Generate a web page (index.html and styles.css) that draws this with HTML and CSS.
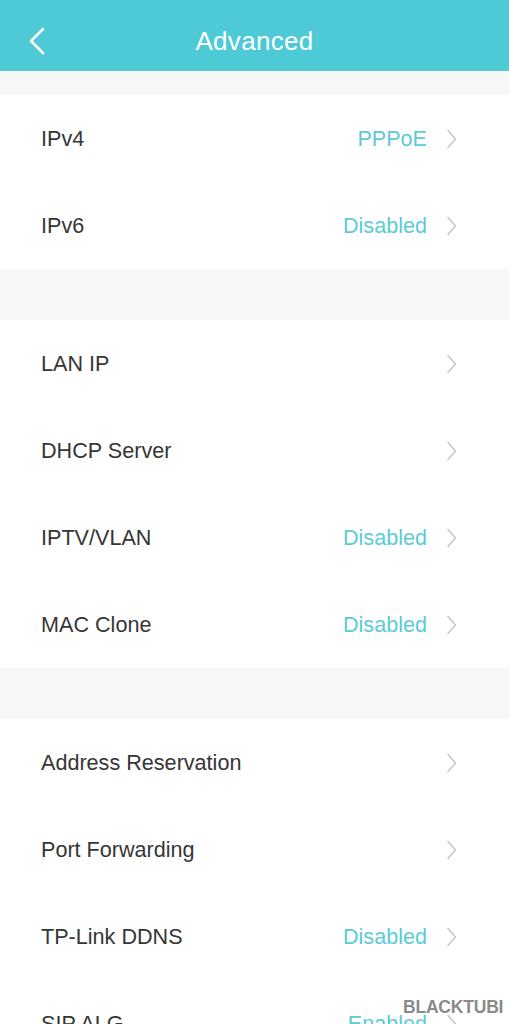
FILE: index.html
```html
<!DOCTYPE html>
<html>
<head>
<meta charset="utf-8">
<link rel="stylesheet" href="styles.css">
</head>
<body>
<div class="app">
  <header class="topbar">
    <svg class="back" width="18" height="28" viewBox="0 0 18 28"><path d="M15 2 L3 14 L15 26" fill="none" stroke="#fff" stroke-width="2.6" stroke-linecap="round" stroke-linejoin="round"/></svg>
    <h1 class="title">Advanced</h1>
  </header>
  <div class="gap first"></div>
  <section class="group">
    <div class="row"><span class="label">IPv4</span><span class="value">PPPoE</span><svg class="chev" width="11" height="20" viewBox="0 0 11 20"><path d="M1.5 1 L9.5 10 L1.5 19" fill="none" stroke="#c4c4c4" stroke-width="1.4"/></svg></div>
    <div class="row"><span class="label">IPv6</span><span class="value">Disabled</span><svg class="chev" width="11" height="20" viewBox="0 0 11 20"><path d="M1.5 1 L9.5 10 L1.5 19" fill="none" stroke="#c4c4c4" stroke-width="1.4"/></svg></div>
  </section>
  <div class="gap"></div>
  <section class="group">
    <div class="row"><span class="label">LAN IP</span><span class="value"></span><svg class="chev" width="11" height="20" viewBox="0 0 11 20"><path d="M1.5 1 L9.5 10 L1.5 19" fill="none" stroke="#c4c4c4" stroke-width="1.4"/></svg></div>
    <div class="row"><span class="label">DHCP Server</span><span class="value"></span><svg class="chev" width="11" height="20" viewBox="0 0 11 20"><path d="M1.5 1 L9.5 10 L1.5 19" fill="none" stroke="#c4c4c4" stroke-width="1.4"/></svg></div>
    <div class="row"><span class="label">IPTV/VLAN</span><span class="value">Disabled</span><svg class="chev" width="11" height="20" viewBox="0 0 11 20"><path d="M1.5 1 L9.5 10 L1.5 19" fill="none" stroke="#c4c4c4" stroke-width="1.4"/></svg></div>
    <div class="row"><span class="label">MAC Clone</span><span class="value">Disabled</span><svg class="chev" width="11" height="20" viewBox="0 0 11 20"><path d="M1.5 1 L9.5 10 L1.5 19" fill="none" stroke="#c4c4c4" stroke-width="1.4"/></svg></div>
  </section>
  <div class="gap"></div>
  <section class="group">
    <div class="row"><span class="label">Address Reservation</span><span class="value"></span><svg class="chev" width="11" height="20" viewBox="0 0 11 20"><path d="M1.5 1 L9.5 10 L1.5 19" fill="none" stroke="#c4c4c4" stroke-width="1.4"/></svg></div>
    <div class="row"><span class="label">Port Forwarding</span><span class="value"></span><svg class="chev" width="11" height="20" viewBox="0 0 11 20"><path d="M1.5 1 L9.5 10 L1.5 19" fill="none" stroke="#c4c4c4" stroke-width="1.4"/></svg></div>
    <div class="row"><span class="label">TP-Link DDNS</span><span class="value">Disabled</span><svg class="chev" width="11" height="20" viewBox="0 0 11 20"><path d="M1.5 1 L9.5 10 L1.5 19" fill="none" stroke="#c4c4c4" stroke-width="1.4"/></svg></div>
    <div class="row"><span class="label">SIP ALG</span><span class="value">Enabled</span><svg class="chev" width="11" height="20" viewBox="0 0 11 20"><path d="M1.5 1 L9.5 10 L1.5 19" fill="none" stroke="#c4c4c4" stroke-width="1.4"/></svg></div>
  </section>
  <div class="watermark">BLACKTUBI</div>
</div>
</body>
</html>
```
FILE: styles.css
```css
html, body {
  margin: 0;
  padding: 0;
  background: #fff;
}
.app {
  position: relative;
  width: 509px;
  height: 1024px;
  overflow: hidden;
  font-family: "Liberation Sans", Arial, sans-serif;
}
.topbar {
  position: relative;
  height: 71px;
  box-sizing: border-box;
  padding-top: 11px;
  background: #4ecad6;
  display: flex;
  align-items: center;
  justify-content: center;
}
.back {
  position: absolute;
  left: 28px;
  top: 27px;
}
.title {
  margin: 0;
  color: #fff;
  font-weight: normal;
  font-size: 26px;
  letter-spacing: 0.3px;
}
.gap {
  height: 51px;
  background: #f7f7f7;
}
.gap.first {
  height: 24px;
}
.group {
  background: #fff;
}
.row {
  height: 87px;
  display: flex;
  align-items: center;
  padding: 0 52px 0 41px;
}
.label {
  flex: 1;
  font-size: 21.6px;
  color: #363636;
}
.value {
  font-size: 21.6px;
  color: #5ccbd6;
  margin-right: 19px;
}
.chev {
  display: block;
}
.watermark {
  position: absolute;
  left: 403px;
  top: 997px;
  font-size: 17.5px;
  font-weight: bold;
  color: #8a8a8a;
  letter-spacing: -0.2px;
}
```
